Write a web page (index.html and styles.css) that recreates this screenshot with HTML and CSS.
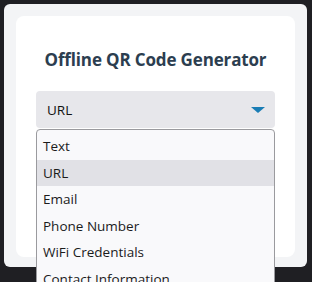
FILE: index.html
```html
<!DOCTYPE html>
<html lang="en">
<head>
  <meta charset="UTF-8" />
  <title>Offline QR Code Generator</title>
  <link rel="stylesheet" href="styles.css">
</head>
<body>
  <div class="frame">
    <div class="card">
      <h1 class="title">Offline QR Code Generator</h1>

      <div class="select-wrap">
        <div class="select">
          <span>URL</span>
          <span class="arrow"></span>
        </div>

        <ul class="options">
          <li>Text</li>
          <li class="active">URL</li>
          <li>Email</li>
          <li>Phone Number</li>
          <li>WiFi Credentials</li>
          <li>Contact Information</li>
        </ul>
      </div>
    </div>
  </div>
</body>
</html>
```

FILE: styles.css
```css
* {
  margin: 0;
  padding: 0;
  box-sizing: border-box;
}

body {
  font-family: 'Open Sans', 'Noto Sans', sans-serif;
  background-color: #1f1f23;
  padding: 4px 5px 0 4px;
  height: 282px;
  overflow: hidden;
}

.frame {
  background-color: #f3f4f6;
  border-radius: 6px;
  padding: 12px;
  height: 263px;
}

.card {
  background-color: #fff;
  border-radius: 8px;
  padding: 32px 20px 0;
  height: 241px;
}

.title {
  color: #2c3e50;
  font-size: 17px;
  line-height: 24px;
  font-weight: 700;
  letter-spacing: -0.15px;
  text-align: center;
  margin-bottom: 19px;
}

.select-wrap {
  position: relative;
}

.select {
  display: flex;
  align-items: center;
  justify-content: space-between;
  height: 37px;
  padding: 0 10px 0 11px;
  background-color: #e7e7eb;
  border-radius: 4px;
  font-size: 13.5px;
  color: #111;
}

.arrow {
  width: 0;
  height: 0;
  border-left: 7px solid transparent;
  border-right: 7px solid transparent;
  border-top: 6px solid #1a7db5;
}

.options {
  position: absolute;
  top: 38px;
  left: 0;
  right: 0;
  list-style: none;
  background-color: #f9f9fb;
  border: 1px solid #9a9a9e;
  border-radius: 4px;
  padding-top: 3px;
  height: 170px;
  overflow: hidden;
}

.options li {
  height: 26.5px;
  line-height: 26.5px;
  padding-left: 6px;
  font-size: 13.5px;
  color: #1b1b1b;
}

.options li.active {
  background-color: #e1e1e6;
}
```
